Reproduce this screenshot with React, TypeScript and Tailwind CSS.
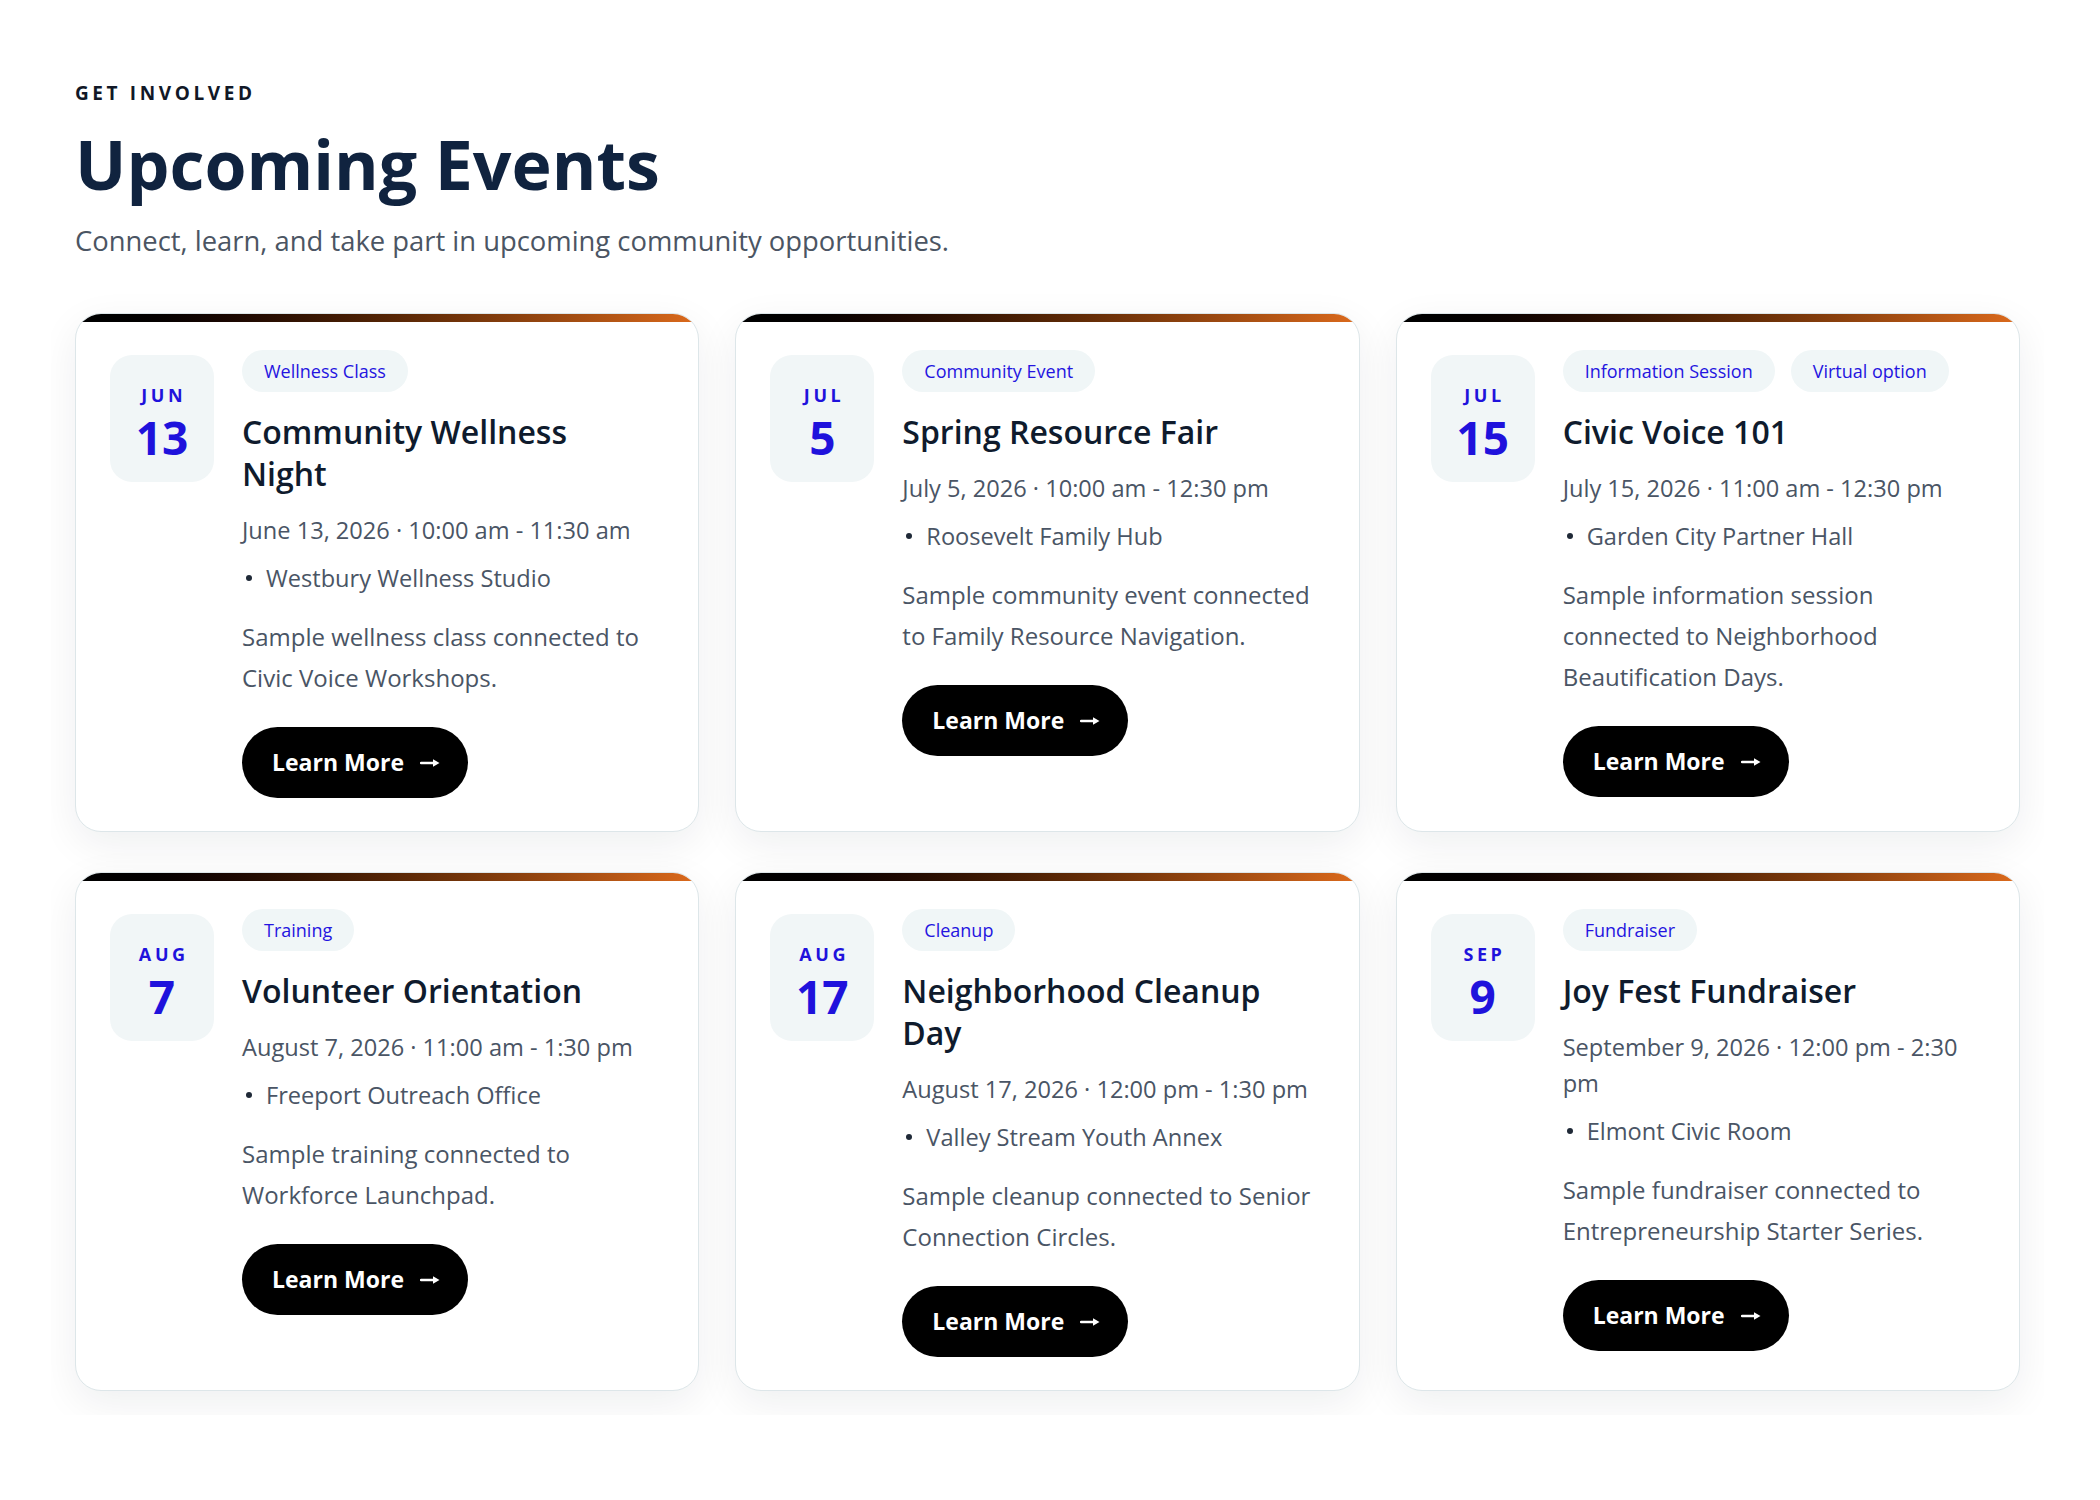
type EventItem = {
  month: string;
  day: string;
  tags: string[];
  title: string;
  when: string;
  place: string;
  summary: string;
};

const events: EventItem[] = [
  {
    month: "JUN",
    day: "13",
    tags: ["Wellness Class"],
    title: "Community Wellness Night",
    when: "June 13, 2026 · 10:00 am - 11:30 am",
    place: "Westbury Wellness Studio",
    summary: "Sample wellness class connected to Civic Voice Workshops.",
  },
  {
    month: "JUL",
    day: "5",
    tags: ["Community Event"],
    title: "Spring Resource Fair",
    when: "July 5, 2026 · 10:00 am - 12:30 pm",
    place: "Roosevelt Family Hub",
    summary: "Sample community event connected to Family Resource Navigation.",
  },
  {
    month: "JUL",
    day: "15",
    tags: ["Information Session", "Virtual option"],
    title: "Civic Voice 101",
    when: "July 15, 2026 · 11:00 am - 12:30 pm",
    place: "Garden City Partner Hall",
    summary: "Sample information session connected to Neighborhood Beautification Days.",
  },
  {
    month: "AUG",
    day: "7",
    tags: ["Training"],
    title: "Volunteer Orientation",
    when: "August 7, 2026 · 11:00 am - 1:30 pm",
    place: "Freeport Outreach Office",
    summary: "Sample training connected to Workforce Launchpad.",
  },
  {
    month: "AUG",
    day: "17",
    tags: ["Cleanup"],
    title: "Neighborhood Cleanup Day",
    when: "August 17, 2026 · 12:00 pm - 1:30 pm",
    place: "Valley Stream Youth Annex",
    summary: "Sample cleanup connected to Senior Connection Circles.",
  },
  {
    month: "SEP",
    day: "9",
    tags: ["Fundraiser"],
    title: "Joy Fest Fundraiser",
    when: "September 9, 2026 · 12:00 pm - 2:30 pm",
    place: "Elmont Civic Room",
    summary: "Sample fundraiser connected to Entrepreneurship Starter Series.",
  },
];

function Arrow() {
  return (
    <svg width="20" height="12" viewBox="0 0 20 12" aria-hidden="true">
      <path d="M1 6h13" stroke="currentColor" strokeWidth="2.4" strokeLinecap="round" />
      <path d="M13 2.2 19.5 6 13 9.8Z" fill="currentColor" />
    </svg>
  );
}

function EventCard({ ev }: { ev: EventItem }) {
  return (
    <article className="overflow-hidden rounded-[26px] border border-[#dde6e9] bg-white shadow-[0_12px_40px_rgba(15,30,45,0.07)]">
      <div className="h-2 bg-linear-to-r from-black to-[#dc6a1c]" />
      <div className="flex gap-[28px] pl-[34px] pr-[41px] pt-[28px] pb-[33px]">
        <div className="mt-[5px] flex h-[127px] w-[104px] shrink-0 flex-col items-center rounded-[22px] bg-[#f1f6f7] pt-[30px] text-[#1f12dc]">
          <span className="text-[18px] font-bold leading-[20px] tracking-[0.2em] pl-[0.2em]">{ev.month}</span>
          <span className="mt-[9px] text-[46px] font-bold leading-[46px]">{ev.day}</span>
        </div>

        <div className="min-w-0 flex-1">
          <div className="flex flex-wrap gap-4">
            {ev.tags.map((t) => (
              <span
                key={t}
                className="inline-flex h-[42px] items-center rounded-full bg-[#f0f6f7] px-[22px] text-[18px] font-medium text-[#2414e0]"
              >
                {t}
              </span>
            ))}
          </div>

          <h3 className="mt-[19px] text-[32px] font-semibold leading-[42px] text-[#0f1b2d]">{ev.title}</h3>

          <p className="mt-[17px] text-[23.6px] leading-[36px] text-[#4a5565]">{ev.when}</p>
          <p className="mt-[12px] flex items-center text-[23.6px] leading-[36px] text-[#4a5565]">
            <span className="mr-[14px] ml-[4px] h-[6px] w-[6px] shrink-0 rounded-full bg-[#1f2937]" />
            {ev.place}
          </p>

          <p className="mt-[20px] text-[24px] leading-[41px] text-[#4a5565]">{ev.summary}</p>

          <button className="mt-[29px] inline-flex h-[71px] items-center gap-[16px] rounded-full bg-black pl-[30px] pr-[28px] text-[23px] font-bold text-white">
            Learn More
            <Arrow />
          </button>
        </div>
      </div>
    </article>
  );
}

export default function App() {
  return (
    <section
      className="min-h-screen bg-white px-[75px] pt-[81px] pb-[60px]"
      style={{ fontFamily: "'Open Sans', 'Noto Sans', sans-serif" }}
    >
      <div className="max-w-[1945px]">
        <p className="text-[19px] font-bold leading-[24px] tracking-[0.19em] text-[#111827]">GET INVOLVED</p>
        <h2 className="mt-[21px] text-[68px] font-bold leading-[76px] text-[#10233f]">Upcoming Events</h2>
        <p className="mt-[19px] text-[27.4px] leading-[40px] text-[#4b5563]">
          Connect, learn, and take part in upcoming community opportunities.
        </p>

        <div className="-mx-6 mt-[28px] overflow-hidden p-6">
          <div className="grid grid-cols-3 gap-x-[36px] gap-y-[40px]">
            {events.map((ev) => (
              <EventCard key={ev.title} ev={ev} />
            ))}
          </div>
        </div>
      </div>
    </section>
  );
}
